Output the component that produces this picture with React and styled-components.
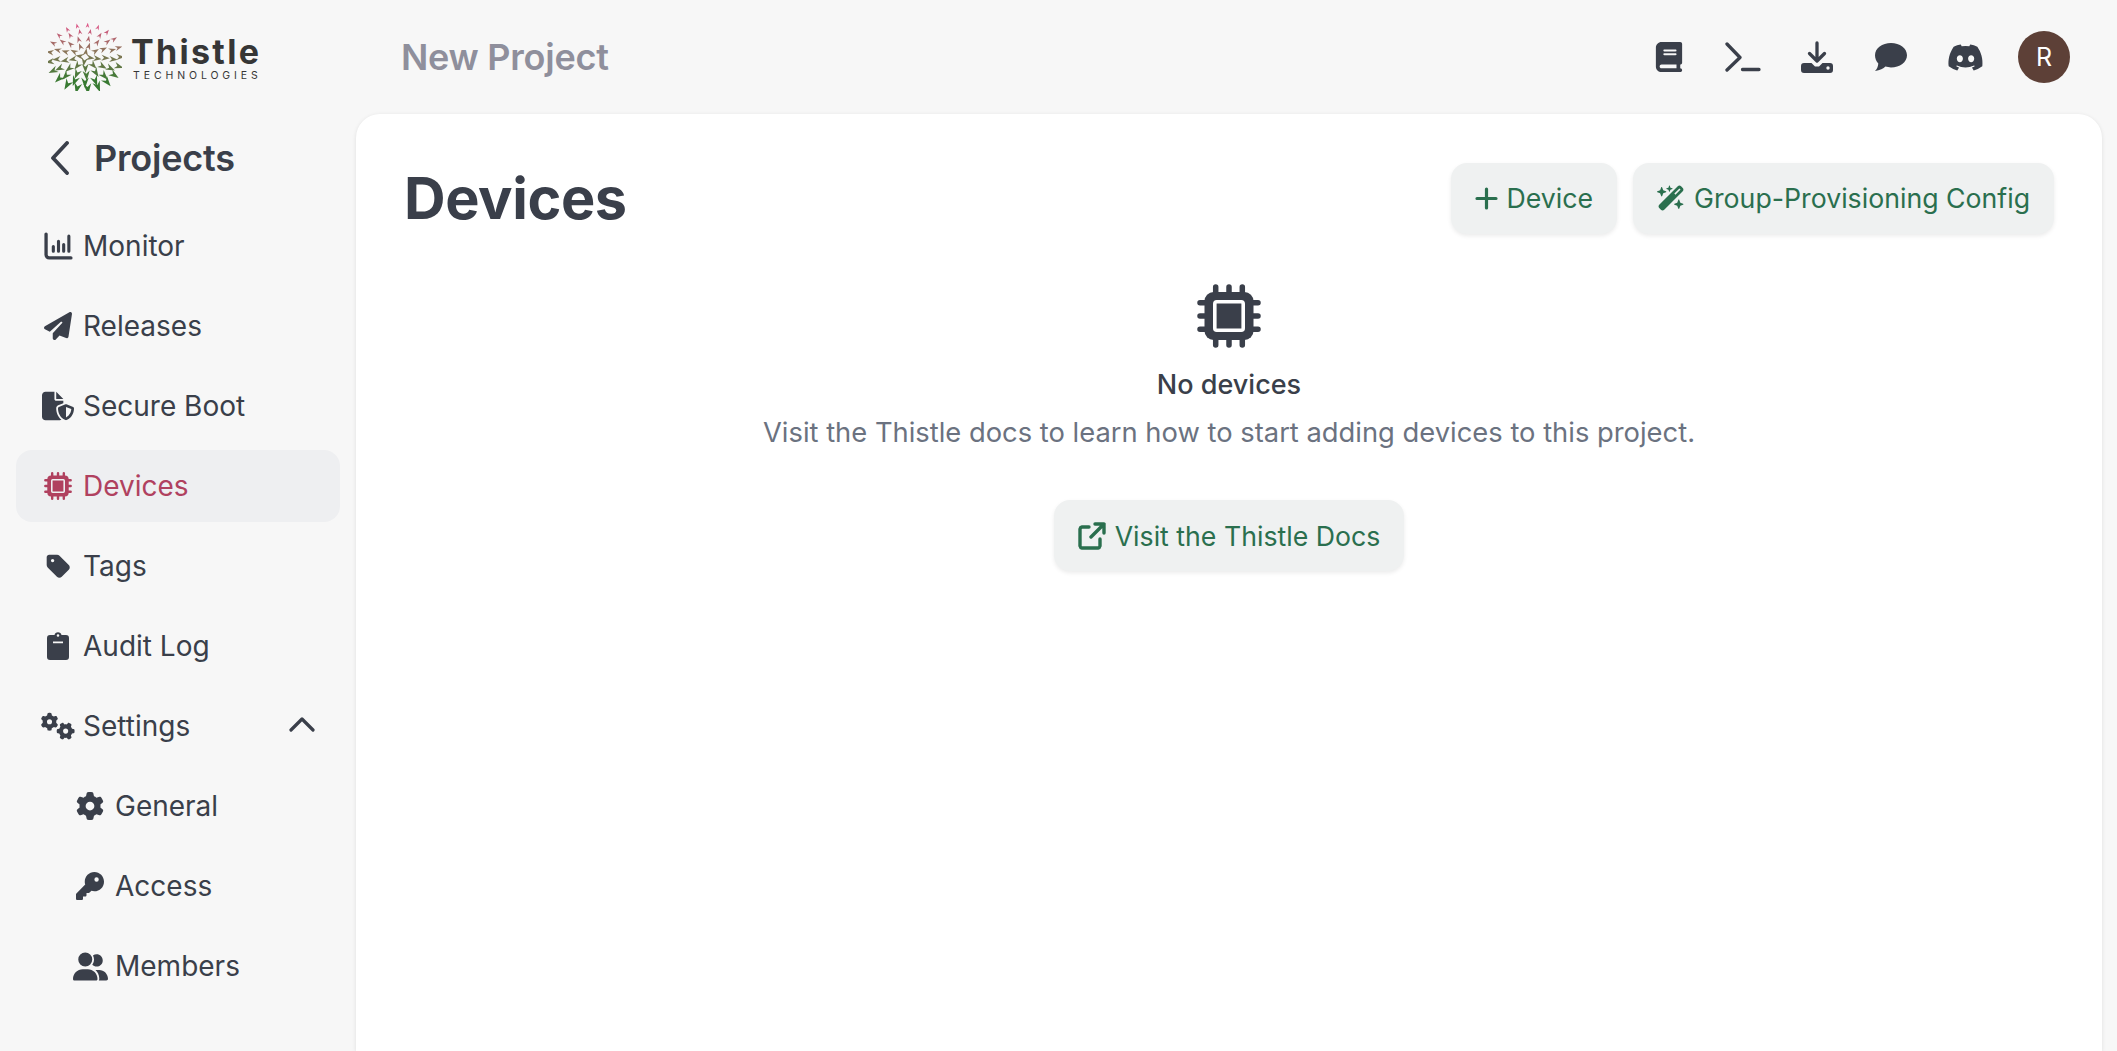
import React from "react";
import styled, { createGlobalStyle } from "styled-components";
import {
  FaPaperPlane, FaFileShield, FaTag, FaGears, FaGear, FaKey, FaUserGroup, FaBook,
  FaDiscord, FaWandMagicSparkles,
} from "react-icons/fa6";

const Global = createGlobalStyle`
  html, body { margin: 0; padding: 0; height: 100%; background: #f7f7f7; }
  body { font-family: Inter, "Liberation Sans", sans-serif; color: #3a3f4a; overflow: hidden; }
`;

const Page = styled.div`
  height: 1051px;
  display: flex;
  flex-direction: column;
  overflow: hidden;
`;
const TopBar = styled.header`
  height: 114px;
  flex: none;
  display: flex;
  align-items: center;
  padding-right: 47px;
`;
const LogoArea = styled.div`
  width: 401px;
  flex: none;
  padding-left: 48px;
  box-sizing: border-box;
  display: flex;
  align-items: center;
  gap: 9px;
`;
const LogoWords = styled.div`
  display: flex;
  flex-direction: column;
  gap: 3px;
  padding-top: 4px;
  color: #363636;
`;
const LogoName = styled.span`
  font-family: Inter, sans-serif;
  font-weight: 700;
  font-size: 34px;
  line-height: 30px;
  letter-spacing: 2.3px;
`;
const LogoSub = styled.span`
  font-family: Inter, sans-serif;
  font-size: 10.5px;
  line-height: 12px;
  letter-spacing: 3.9px;
  padding-left: 2px;
  white-space: nowrap;
`;
const ProjectTitle = styled.div`
  font-size: 36px;
  font-weight: 600;
  color: #8f8f9c;
  letter-spacing: -0.25px;
  flex: 1;
`;
const TopIcons = styled.div`
  display: flex;
  align-items: center;
`;
const TopIcon = styled.span`
  width: 74px;
  display: flex;
  justify-content: center;
  color: #3a3f4a;
`;
const Avatar = styled.div`
  width: 52px;
  height: 52px;
  margin-left: 16px;
  border-radius: 50%;
  background: #5d4037;
  color: #fff;
  display: flex;
  align-items: center;
  justify-content: center;
  font-size: 25px;
`;
const Body = styled.div`
  flex: 1;
  display: flex;
  min-height: 0;
`;
const Sidebar = styled.aside`
  width: 356px;
  flex: none;
  box-sizing: border-box;
  padding: 8px 16px 0;
`;
const BackRow = styled.div`
  height: 72px;
  display: flex;
  align-items: center;
  padding-left: 34px;
  gap: 24px;
  font-size: 36px;
  font-weight: 600;
  letter-spacing: -0.2px;
  margin-bottom: 16px;
`;
const Nav = styled.nav`
  display: flex;
  flex-direction: column;
  gap: 8px;
`;
const Item = styled.div`
  height: 72px;
  border-radius: 16px;
  display: flex;
  align-items: center;
  box-sizing: border-box;
  padding-left: ${(p) => (p.$sub ? 60 : 28)}px;
  padding-right: 25px;
  gap: 11px;
  font-size: 28px;
  background: ${(p) => (p.$active ? "#eeeff1" : "transparent")};
  color: ${(p) => (p.$active ? "#b0415f" : "#3a3f4a")};
`;
const IconSlot = styled.span`
  width: 28px;
  flex: none;
  display: flex;
  justify-content: center;
  svg { flex: none; }
`;
const ItemLabel = styled.span`
  flex: 1;
`;
const Caret = styled.span`
  display: flex;
  margin-bottom: 4px;
`;
const Card = styled.main`
  flex: 1;
  margin-right: 15px;
  background: #fff;
  border-radius: 24px 24px 0 0;
  box-shadow: 0 1px 4px rgba(0, 0, 0, 0.1);
  padding: 48px 48px 0;
`;
const CardHead = styled.div`
  display: flex;
  justify-content: space-between;
  align-items: center;
  height: 72px;
`;
const Heading = styled.h1`
  margin: 0;
  font-size: 57.6px;
  font-weight: 700;
  color: #3a3f4a;
  letter-spacing: -0.4px;
`;
const Actions = styled.div`
  display: flex;
  gap: 16px;
`;
const Button = styled.button`
  height: 71px;
  padding: 0 24px;
  gap: 9px;
  border: 0;
  border-radius: 16px;
  background: #eff1f1;
  color: #2a6f4e;
  font: 400 26.7px Inter, sans-serif;
  display: inline-flex;
  align-items: center;
  box-shadow: 0 2px 4px rgba(0, 0, 0, 0.08);
`;
const Empty = styled.div`
  display: flex;
  flex-direction: column;
  align-items: center;
  padding-top: 50px;
`;
const EmptyTitle = styled.div`
  margin-top: 17px;
  font-size: 27px;
  font-weight: 500;
  line-height: 40px;
  color: #3a3f4a;
`;
const EmptyText = styled.div`
  margin-top: 8px;
  font-size: 27.35px;
  line-height: 40px;
  color: #6b7280;
`;
const EmptyAction = styled.div`
  margin-top: 47px;
`;

const Chart = () => (
  <svg width="29" height="29" viewBox="0 0 28 28" fill="none" stroke="currentColor" strokeLinecap="round">
    <path d="M2 2v20a3 3 0 0 0 3 3h21" strokeWidth="3.200" />
    <path d="M9 14v4.500M14 9v9.500M19 12v6.500M24 4v14.500" strokeWidth="3" />
  </svg>
);
const ChipGlyph = ({ size, gap }) => (
  <svg width={size} height={size} viewBox="0 0 64 64" fill="none">
    <path stroke="currentColor" strokeWidth="5.500" strokeLinecap="round" d="M18.700 3v58M32 3v58M45.300 3v58M3 18.700h58M3 32h58M3 45.300h58" />
    <rect x="7.500" y="8" width="49" height="48" rx="9" fill="currentColor" />
    <rect x="17.800" y="17.800" width="28.400" height="28.400" rx="2" fill="currentColor" stroke={gap} strokeWidth="3.600" />
  </svg>
);
const Clipboard = () => (
  <svg width="22" height="28" viewBox="0 0 22 28">
    <path fill="currentColor" fillRule="evenodd" d="M3 3h4.500a3.600 3.600 0 0 1 7 0H19a3 3 0 0 1 3 3v19a3 3 0 0 1-3 3H3a3 3 0 0 1-3-3V6a3 3 0 0 1 3-3zM11 2.200a1.300 1.300 0 1 0 0 2.600 1.300 1.300 0 0 0 0-2.600zM6 9.500v1.700h10V9.500z" />
  </svg>
);
const Terminal = () => (
  <svg width="36" height="30" viewBox="0 0 36 30" fill="none" stroke="currentColor" strokeWidth="3.300" strokeLinecap="round" strokeLinejoin="round">
    <path d="M2 2l13 13.500L2 28M17.500 27.500H34" />
  </svg>
);
const Download = () => (
  <svg width="32" height="32" viewBox="0 0 32 32">
    <path fill="none" stroke="currentColor" strokeWidth="3.300" strokeLinecap="round" strokeLinejoin="round" d="M16 2v17M8.500 12.500L16 20l7.500-7.500" />
    <path fill="currentColor" fillRule="evenodd" d="M3 22h7.500l3.500 3.500h4l3.500-3.500H29a3 3 0 0 1 3 3v4a3 3 0 0 1-3 3H3a3 3 0 0 1-3-3v-4a3 3 0 0 1 3-3zM27 25.300a1.700 1.700 0 1 0 0 3.400 1.700 1.700 0 0 0 0-3.400z" />
  </svg>
);
const Bubble = () => (
  <svg width="32" height="28" viewBox="0 0 32 28">
    <path fill="currentColor" d="M16 0c8.800 0 16 5.100 16 12.200 0 7-7.200 12.200-16 12.200-2 0-3.900-.300-5.600-.800C8.500 25.500 5 27.500 0 28c2-1.800 3-4.600 3.300-7.600C1.200 18.200 0 15.300 0 12.200 0 5.100 7.200 0 16 0z" />
  </svg>
);
const ChevronLeft = () => (
  <svg width="20" height="34" viewBox="0 0 20 34" fill="none" stroke="currentColor" strokeWidth="3.800" strokeLinecap="round" strokeLinejoin="round">
    <path d="M17 2L3 17l14 15" />
  </svg>
);
const ChevronUp = () => (
  <svg width="26" height="16" viewBox="0 0 26 16" fill="none" stroke="currentColor" strokeWidth="3.200" strokeLinecap="round" strokeLinejoin="round">
    <path d="M2 14L13 3l11 11" />
  </svg>
);
const Plus = () => (
  <svg width="23" height="23" viewBox="0 0 23 23" fill="none" stroke="currentColor" strokeWidth="3.200" strokeLinecap="round">
    <path d="M11.500 2v19M2 11.500h19" />
  </svg>
);
const External = () => (
  <svg width="28" height="28" viewBox="0 0 28 28" fill="none" stroke="currentColor" strokeWidth="3.400" strokeLinecap="round" strokeLinejoin="round">
    <path d="M11 5H4a2.500 2.500 0 0 0-2 2v17a2.500 2.500 0 0 0 2 2h16a2.500 2.500 0 0 0 2-2v-7M13 15L26 2M17 2h9v9" />
  </svg>
);

const mix = (a, b, t) => a.map((v, i) => Math.round(v + (b[i] - v) * t));
const Logo = () => {
  const arrows = [];
  const rings = [[5, 4, 0.1], [12, 9, 0.2], [20, 13, 0.1], [28, 17, 0.25], [35, 21, 0]];
  rings.forEach(([r, n, off], ri) => {
    for (let i = 0; i < n; i++) {
      const th = ((i + off) / n) * Math.PI * 2;
      const x = 37 + r * Math.cos(th);
      const y = 34 + r * Math.sin(th) * 0.9;
      const t = Math.min(1, Math.max(0, (y - 2) / 55));
      const c = t < 0.5 ? mix([222, 84, 134], [136, 118, 88], t * 2) : mix([136, 118, 88], [56, 122, 50], (t - 0.5) * 2);
      const s = 2.800 + 3.800 * (y / 68);
      const rot = (th * 180) / Math.PI + 90;
      arrows.push(
        <path
          key={`${ri}-${i}`}
          d={`M0 ${-s}L${s * 0.62} ${s * 0.75}L0 ${s * 0.2}L${-s * 0.62} ${s * 0.75}Z`}
          fill={`rgb(${c.join(",")})`}
          transform={`translate(${x.toFixed(1)} ${y.toFixed(1)}) rotate(${rot.toFixed(0)})`}
        />
      );
    }
  });
  return <svg width="74" height="68" viewBox="0 0 74 68">{arrows}</svg>;
};

const items = [
  { label: "Monitor", icon: <Chart /> },
  { label: "Releases", icon: <FaPaperPlane size={28} /> },
  { label: "Secure Boot", icon: <FaFileShield size={32} /> },
  { label: "Devices", icon: <ChipGlyph size={28} gap="#eeeff1" />, active: true },
  { label: "Tags", icon: <FaTag size={27} /> },
  { label: "Audit Log", icon: <Clipboard /> },
  { label: "Settings", icon: <FaGears size={34} />, open: true },
  { label: "General", icon: <FaGear size={28} />, sub: true },
  { label: "Access", icon: <FaKey size={28} />, sub: true },
  { label: "Members", icon: <FaUserGroup size={35} />, sub: true },
];

export default function App() {
  return (
    <Page>
      <Global />
      <TopBar>
        <LogoArea>
          <Logo />
          <LogoWords>
            <LogoName>Thistle</LogoName>
            <LogoSub>TECHNOLOGIES</LogoSub>
          </LogoWords>
        </LogoArea>
        <ProjectTitle>New Project</ProjectTitle>
        <TopIcons>
          <TopIcon><FaBook size={30} /></TopIcon>
          <TopIcon><Terminal /></TopIcon>
          <TopIcon><Download /></TopIcon>
          <TopIcon><Bubble /></TopIcon>
          <TopIcon><FaDiscord size={37} /></TopIcon>
          <Avatar>R</Avatar>
        </TopIcons>
      </TopBar>
      <Body>
        <Sidebar>
          <BackRow>
            <ChevronLeft />
            Projects
          </BackRow>
          <Nav>
            {items.map((it) => (
              <Item key={it.label} $active={it.active} $sub={it.sub}>
                <IconSlot>{it.icon}</IconSlot>
                <ItemLabel>{it.label}</ItemLabel>
                {it.open && <Caret><ChevronUp /></Caret>}
              </Item>
            ))}
          </Nav>
        </Sidebar>
        <Card>
          <CardHead>
            <Heading>Devices</Heading>
            <Actions>
              <Button><Plus />Device</Button>
              <Button><FaWandMagicSparkles size={28} />Group-Provisioning Config</Button>
            </Actions>
          </CardHead>
          <Empty>
            <ChipGlyph size={64} gap="#fff" />
            <EmptyTitle>No devices</EmptyTitle>
            <EmptyText>Visit the Thistle docs to learn how to start adding devices to this project.</EmptyText>
            <EmptyAction>
              <Button><External />Visit the Thistle Docs</Button>
            </EmptyAction>
          </Empty>
        </Card>
      </Body>
    </Page>
  );
}
